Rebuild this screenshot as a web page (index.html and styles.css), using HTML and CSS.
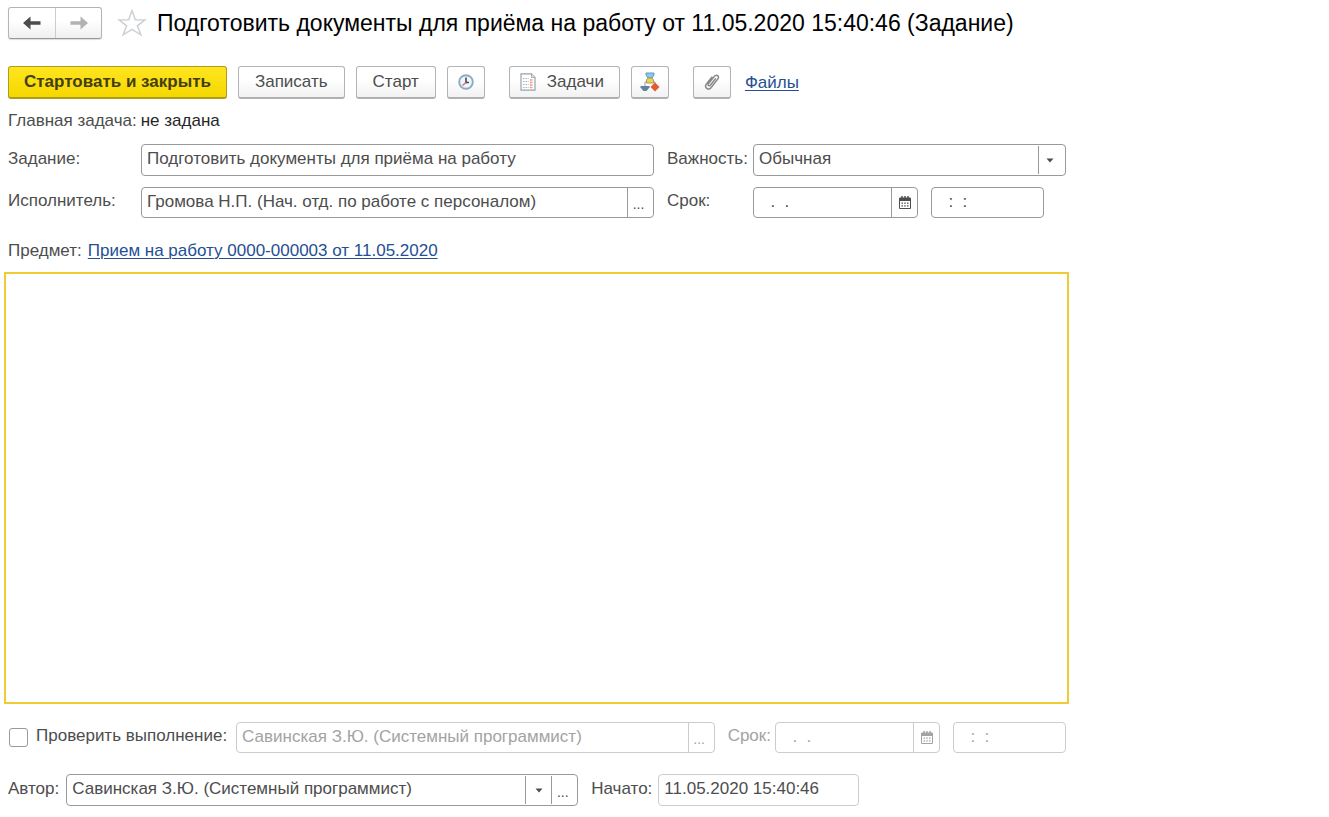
FILE: index.html
```html
<!DOCTYPE html>
<html lang="ru">
<head>
<meta charset="utf-8">
<meta name="viewport" content="width=device-width, initial-scale=1">
<title>Подготовить документы для приёма на работу (Задание)</title>
<link rel="stylesheet" href="styles.css">
</head>
<body>
<svg class="defs" aria-hidden="true">
  <symbol id="calendar" viewBox="0 0 12 13">
    <path fill="currentColor" fill-rule="evenodd" d="M1 1.500h1.300V0h1.400v1.500h1.600V0h1.400v1.500h1.600V0h1.400v1.500H11q1 0 1 1V12q0 1-1 1H1q-1 0-1-1V2.500q0-1 1-1zM1 5v7h10V5z"/>
    <path fill="currentColor" d="M2.500 6.500h1.500v1.200H2.500zM5.200 6.500h1.500v1.200H5.200zM8 6.500h1.500v1.200H8zM2.500 9.300h1.500v1.200H2.500zM5.200 9.300h1.500v1.200H5.200zM8 9.300h1.500v1.200H8z"/>
  </symbol>
  <symbol id="caret" viewBox="0 0 8 5"><path fill="currentColor" d="M.5.5h7L4 4.500z"/></symbol>
</svg>
<main class="form">
  <header class="head">
    <nav class="history" aria-label="История">
      <button class="history-btn" type="button" aria-label="Назад"><svg width="18" height="14" viewBox="0 0 18 14"><path fill="#4c4c4c" d="M0 7 7.500.5V5.300H17.500V8.700H7.500V13.500z"/></svg></button>
      <button class="history-btn" type="button" aria-label="Вперёд"><svg width="18" height="14" viewBox="0 0 18 14"><path fill="#b2b2b2" d="M18 7 10.500.5V5.300H.5V8.700H10.500V13.500z"/></svg></button>
    </nav>
    <button class="star" type="button" aria-label="В избранное"><svg width="30" height="28" viewBox="0 0 30 28"><path fill="#fff" stroke="#cdd0d4" stroke-width="1.500" d="M15 1.500 18.300 10.700 28 10.900 20.400 16.800 23.800 25.800 15 20.300 6.200 25.800 9.600 16.800 2 10.900 11.700 10.700z"/></svg></button>
    <h1 class="title">Подготовить документы для приёма на работу от 11.05.2020 15:40:46 (Задание)</h1>
  </header>

  <div class="toolbar">
    <div class="group">
      <button class="btn btn-primary" type="button">Стартовать и закрыть</button>
      <button class="btn" type="button">Записать</button>
      <button class="btn" type="button">Старт</button>
      <button class="btn btn-icon" type="button" aria-label="Отложенный старт"><svg width="16" height="16" viewBox="0 0 16 16"><circle cx="8" cy="8" r="6.800" fill="#f1f6fa" stroke="#8aabc6" stroke-width="1.900"/><path d="M8 3.500V8.500H11" fill="none" stroke="#3f4b58" stroke-width="1.600"/><path d="M8 8.500 4.500 11.500" stroke="#ea6758" stroke-width="1.500"/></svg></button>
    </div>
    <div class="group">
      <button class="btn btn-tasks" type="button"><svg width="16" height="18" viewBox="0 0 16 18"><path fill="#fff" stroke="#98a2ab" stroke-width="1.200" d="M1 .8H11.500L15 4.500V17.200H1z"/><path fill="#dce2e7" stroke="#98a2ab" stroke-width=".8" d="M11.500.8V4.500H15"/><path stroke="#9fb0be" stroke-width="1.200" stroke-dasharray="1.500 1.200" d="M3 5.500H9M3 8.500H9M3 11.500H9M3 14.500H9"/><path stroke="#f08670" stroke-width="1.500" stroke-dasharray="1.700 .8" d="M10 7H13M10 9.500H13M10 12H13M10 14.500H13"/></svg>Задачи</button>
      <button class="btn btn-icon" type="button" aria-label="Схема процесса"><svg width="20" height="20" viewBox="0 0 20 20"><path d="M10 5V9M5 15V10H15V14" fill="none" stroke="#9aa3a8"/><path fill="#8cc6ea" stroke="#4b96c7" stroke-width=".9" d="M6 1H14V3L12 6H8L6 3z"/><path fill="#ead15e" stroke="#a99540" stroke-width=".9" d="M8 6H12L13.500 8V11H6.500V8z"/><path fill="#60829f" d="M.5 14H9.500V15.500L6.500 19H3.500L.5 15.500z"/><path fill="#e25b32" d="M15 10.500 19.500 15 15 19.500 10.500 15z"/></svg></button>
    </div>
    <div class="group">
      <button class="btn btn-icon" type="button" aria-label="Присоединить файл"><svg width="18" height="18" viewBox="0 0 18 18"><path fill="none" stroke="#888" stroke-width="1.500" stroke-linecap="round" d="M12.500 5.800 7.300 12.200C6 13.600 4.300 12.200 5.400 10.800L11.300 3.400C13.600.7 16.800 3.300 14.700 6.100L8.200 14.500C5.200 18 .8 14.500 3.500 10.900L8.800 4.200"/></svg></button>
      <a class="link files" href="#files">Файлы</a>
    </div>
  </div>

  <p class="main-task"><span>Главная задача:</span><span class="dark">не задана</span></p>

  <div class="fields">
    <label for="task">Задание:</label>
    <div class="field"><input id="task" type="text" value="Подготовить документы для приёма на работу"></div>
    <label class="second" for="priority">Важность:</label>
    <div class="field"><select id="priority"><option>Обычная</option></select><span class="cell inset mark"><svg width="8" height="5"><use href="#caret"/></svg></span></div>

    <label for="performer">Исполнитель:</label>
    <div class="field short"><input id="performer" type="text" value="Громова Н.П. (Нач. отд. по работе с персоналом)"><button class="cell dots" type="button" aria-label="Выбрать исполнителя">...</button></div>
    <label class="second" for="due">Срок:</label>
    <div class="when">
      <div class="field short date"><input id="due" type="text" value="  .  ."><button class="cell" type="button" aria-label="Календарь"><svg width="12" height="13"><use href="#calendar"/></svg></button></div>
      <div class="field short time"><input type="text" value="  :  :" aria-label="Время срока"></div>
    </div>
  </div>

  <p class="subject"><span>Предмет:</span><a class="link" href="#subject">Прием на работу 0000-000003 от 11.05.2020</a></p>

  <textarea class="description" aria-label="Описание задания"></textarea>

  <div class="row check-row">
    <input class="tick" id="check" type="checkbox">
    <label for="check">Проверить выполнение:</label>
    <div class="field short off grow"><input type="text" value="Савинская З.Ю. (Системный программист)" aria-label="Проверяющий" disabled><button class="cell dots" type="button" aria-label="Выбрать проверяющего" disabled>...</button></div>
    <label class="muted" for="check-due">Срок:</label>
    <div class="when">
      <div class="field short off date"><input id="check-due" type="text" value="  .  ." disabled><button class="cell" type="button" aria-label="Календарь проверки" disabled><svg width="12" height="13"><use href="#calendar"/></svg></button></div>
      <div class="field short off time"><input type="text" value="  :  :" aria-label="Время проверки" disabled></div>
    </div>
  </div>

  <div class="row author-row">
    <label for="author">Автор:</label>
    <div class="field author"><input id="author" type="text" value="Савинская З.Ю. (Системный программист)"><button class="cell inset" type="button" aria-label="Список авторов"><svg width="8" height="5"><use href="#caret"/></svg></button><button class="cell inset dots" type="button" aria-label="Выбрать автора">...</button></div>
    <label for="started">Начато:</label>
    <div class="field readonly started"><input id="started" type="text" value="11.05.2020 15:40:46" readonly></div>
  </div>
</main>
</body>
</html>
```
FILE: styles.css
```css
* { box-sizing: border-box; }

body {
  margin: 0;
  background: #fff;
  color: #4d4d4d;
  font: 17px/20px "Liberation Sans", Arial, sans-serif;
}

button, input, select, textarea { font: inherit; color: inherit; }
button, select { cursor: pointer; }
svg { display: block; flex: none; }
p { margin: 0; }
label { white-space: nowrap; }

.defs { position: absolute; width: 0; height: 0; }

.form {
  display: flex;
  flex-direction: column;
  min-height: 100vh;
  padding: 7px 8px 11px;
}

.head { display: flex; align-items: center; min-height: 32px; }

.history {
  display: flex;
  border: 1px solid #b4b4b4;
  border-bottom-color: #999;
  border-radius: 3px;
  background: linear-gradient(#fff 40%, #f0f0f0);
  box-shadow: 0 1px 1px #ddd;
}

.history-btn {
  display: grid;
  place-items: center;
  width: 46px;
  height: 30px;
  padding: 0;
  border: 0;
  background: none;
}

.history-btn + .history-btn { border-left: 1px solid #ccc; }

.star { margin-left: 15px; padding: 0; border: 0; background: none; }

.title {
  margin: 0 0 0 10px;
  color: #000;
  font-size: 23px;
  font-weight: 400;
  line-height: 28px;
}

.toolbar { display: flex; flex-wrap: wrap; gap: 24px; margin-top: 27px; }
.group { display: flex; align-items: center; gap: 11px; }

.btn {
  display: flex;
  align-items: center;
  justify-content: center;
  height: 33px;
  padding: 0 16px;
  border: 1px solid #b4b4b4;
  border-bottom: 2px solid #b0b0b0;
  border-radius: 3px;
  background: linear-gradient(#fff 40%, #f2f2f2);
  white-space: nowrap;
}

.btn-primary {
  padding: 0 15px;
  border-color: #b09b1c;
  background: linear-gradient(#ffe51f, #f5d800);
  color: #443e10;
  font-weight: 700;
}

.btn-icon { width: 38px; padding: 0; }
.btn-tasks { gap: 11px; padding: 0 15px 0 10px; }

.link { color: #254f93; text-decoration-thickness: 1px; text-underline-offset: 2px; }
.files { margin-left: 3px; }

.main-task { display: flex; gap: 4px; margin-top: 12px; }
.dark { color: #262626; }

.fields {
  display: grid;
  grid-template-columns: 133px 513fr 99px 313fr;
  row-gap: 11px;
  align-items: center;
  margin-top: 13px;
}

.fields,
.check-row { width: 100%; max-width: 1058px; }
.second { padding-left: 13px; }
.fields label { padding-bottom: 3px; }

.field {
  display: flex;
  min-width: 0;
  height: 32px;
  border: 1px solid #999;
  border-radius: 4px;
  background: #fff;
  overflow: hidden;
}

.short { height: 31px; }

.field input,
.field select {
  flex: 1;
  width: 0;
  min-width: 0;
  padding: 0 5px 2px;
  border: 0;
  outline: 0;
  appearance: none;
  background: none;
}

.cell {
  display: grid;
  flex: none;
  place-items: center;
  width: 26px;
  padding: 0;
  border: 0;
  border-left: 1px solid #999;
  background: none;
}

.inset { margin: 1px 0; }
.mark { width: 27px; padding-right: 4px; pointer-events: none; }
.dots { padding: 3px 4px 0 0; font-size: 14px; }

.when { display: flex; gap: 13px; }
.date { width: 165px; }
.time { width: 113px; }
.when input { padding-left: 7px; white-space: pre; }

.off { border-color: #ccc; color: #a3a3a3; }
.off .cell { border-color: #ccc; }
.readonly { border-color: #ccc; }
.muted { color: #a3a3a3; }

.subject { display: flex; gap: 6px; margin-top: 23px; }

.description {
  flex: 1;
  width: calc(100% + 7px);
  max-width: 1065px;
  min-height: 200px;
  margin: 11px 0 0 -4px;
  padding: 6px;
  border: 2px solid #f0cb35;
  outline: 0;
  resize: none;
}

.row { display: flex; align-items: center; }
.row label { padding-bottom: 3px; }

.check-row { margin-top: 18px; }

.tick {
  width: 19px;
  height: 19px;
  margin: 0 8px 0 1px;
  border: 1px solid #999;
  border-radius: 3px;
  appearance: none;
  background: #fff;
}

.tick:checked { background: #f0cb35; }
.grow { flex: 1; margin: 0 13px 0 9px; }
.check-row .when { margin-left: 4px; }

.author-row { margin-top: 21px; }
.author { flex: 0 1 512px; margin: 0 13px 0 7px; }
.started { flex: 0 1 201px; margin-left: 6px; }
```
